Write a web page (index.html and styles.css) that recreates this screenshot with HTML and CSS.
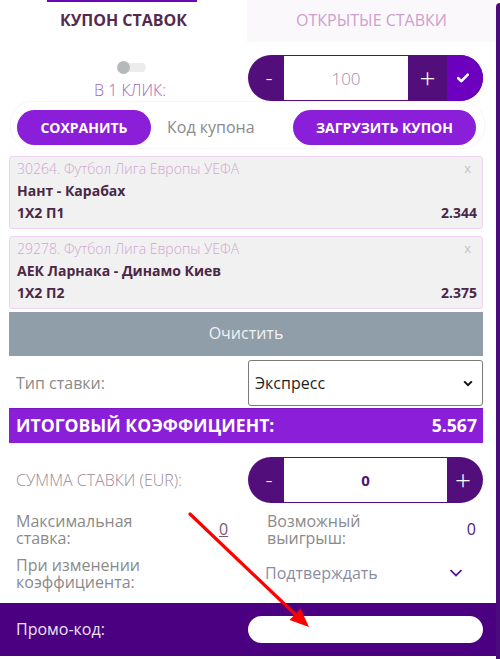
FILE: index.html
```html
<!DOCTYPE html>
<html lang="ru">
<head>
<meta charset="utf-8">
<title>Купон ставок</title>
<link rel="stylesheet" href="styles.css">
</head>
<body>
<div class="page">
  <div class="main">
    <div class="tabs">
      <div class="tab tab-active">КУПОН СТАВОК</div>
      <div class="tab tab-idle">ОТКРЫТЫЕ СТАВКИ</div>
    </div>

    <div class="oneclick">
      <div class="oneclick-left">
        <div class="toggle"><span class="toggle-knob"></span></div>
        <div class="oneclick-label">В 1 КЛИК:</div>
      </div>
      <div class="stepper">
        <div class="step-btn step-minus">-</div>
        <div class="step-input step-input-light">100</div>
        <div class="step-btn step-plus">+</div>
        <div class="step-btn step-check">
          <svg width="12" height="10" viewBox="0 0 12 10"><path d="M1.2 5.2 L4.4 8.2 L10.8 1.6" fill="none" stroke="#fff" stroke-width="2.6" stroke-linecap="round" stroke-linejoin="round"/></svg>
        </div>
      </div>
    </div>

    <div class="coupon-row">
      <div class="pill-btn pill-save">СОХРАНИТЬ</div>
      <div class="coupon-code">Код купона</div>
      <div class="pill-btn pill-load">ЗАГРУЗИТЬ КУПОН</div>
    </div>

    <div class="bets">
      <div class="bet">
        <div class="bet-line bet-head"><span class="bet-league">30264. Футбол Лига Европы УЕФА</span><span class="bet-close">x</span></div>
        <div class="bet-line bet-match">Нант - Карабах</div>
        <div class="bet-line bet-market"><span>1X2 П1</span><span>2.344</span></div>
      </div>
      <div class="bet">
        <div class="bet-line bet-head"><span class="bet-league">29278. Футбол Лига Европы УЕФА</span><span class="bet-close">x</span></div>
        <div class="bet-line bet-match">АЕК Ларнака - Динамо Киев</div>
        <div class="bet-line bet-market"><span>1X2 П2</span><span>2.375</span></div>
      </div>
    </div>

    <div class="clear-btn">Очистить</div>

    <div class="type-row">
      <div class="type-label">Тип ставки:</div>
      <div class="select">
        <span>Экспресс</span>
        <svg width="10" height="7" viewBox="0 0 10 7"><path d="M1.2 1.4 L5 5.2 L8.8 1.4" fill="none" stroke="#111" stroke-width="2"/></svg>
      </div>
    </div>

    <div class="total-bar">
      <span>ИТОГОВЫЙ КОЭФФИЦИЕНТ:</span>
      <span>5.567</span>
    </div>

    <div class="sum-row">
      <div class="sum-label">СУММА СТАВКИ (EUR):</div>
      <div class="stepper">
        <div class="step-btn step-minus">-</div>
        <div class="step-input step-input-bold">0</div>
        <div class="step-btn step-plus step-plus-end">+</div>
      </div>
    </div>

    <div class="info-grid">
      <div class="info-label">Максимальная<br>ставка:</div>
      <div class="info-value info-link">0</div>
      <div class="info-label info-label-right">Возможный<br>выигрыш:</div>
      <div class="info-value info-win">0</div>
    </div>

    <div class="change-row">
      <div class="info-label">При изменении<br>коэффициента:</div>
      <div class="confirm">
        <span>Подтверждать</span>
        <svg width="14" height="8" viewBox="0 0 14 8"><path d="M1.5 1.2 L7 6.4 L12.5 1.2" fill="none" stroke="#5a1a8a" stroke-width="1.8"/></svg>
      </div>
    </div>

    <div class="promo">
      <div class="promo-label">Промо-код:</div>
      <div class="promo-input"></div>
    </div>
  </div>
  <div class="edge"></div>

  <svg class="annotation" width="500" height="659" viewBox="0 0 500 659">
    <line x1="190" y1="514" x2="297" y2="616" stroke="#ff0000" stroke-width="3.2" stroke-linecap="round"/>
    <polygon points="309,627 289.5,620 300.5,608.5" fill="#ff0000"/>
  </svg>
</div>
</body>
</html>
```

FILE: styles.css
```css
* { box-sizing: border-box; }
html, body { margin: 0; padding: 0; background: #fff; }
body { font-family: "Open Sans", "Liberation Sans", sans-serif; font-size: 16px; }

.page { position: relative; width: 500px; height: 659px; display: flex; overflow: hidden; }
.main { width: 496px; display: flex; flex-direction: column; }
.edge { width: 4px; margin-top: 3px; background: #4b0a7e; border-top-left-radius: 6px; }

.annotation { position: absolute; left: 0; top: 0; pointer-events: none; }

/* tabs */
.tabs { display: grid; grid-template-columns: 247px 249px; height: 42px; }
.tab { display: flex; align-items: center; justify-content: center; font-size: 16px; padding-bottom: 2px; }
.tab-active { position: relative; color: #522c4f; font-weight: 700; background: #fff; }
.tab-active::before { content: ""; position: absolute; left: 47px; top: 0; width: 150px; height: 2px; background: #6a08b8; }
.tab-idle { color: #cc9fcd; background: #fbf8fb; font-weight: 400; }

/* one click */
.oneclick { display: flex; height: 59px; }
.oneclick-left { width: 248px; display: flex; flex-direction: column; align-items: center; padding-top: 19px; padding-left: 14px; }
.toggle { position: relative; width: 29px; height: 13px; }
.toggle::before { content: ""; position: absolute; left: 5px; top: 2px; width: 24px; height: 9px; border-radius: 5px; background: #ececec; }
.toggle-knob { position: absolute; left: 0; top: 0; width: 13px; height: 13px; border-radius: 50%; background: #b5b9b9; }
.oneclick-label { margin-top: 6px; color: #9d6ab8; font-weight: 300; font-size: 16px; line-height: 22px; margin-left: -2px; }

.stepper { margin-top: 13px; width: 235px; height: 46px; display: flex; border-radius: 23px; overflow: hidden; background: #520f7c; }
.step-btn { display: flex; align-items: center; justify-content: center; color: #fff; font-weight: 300; }
.step-minus { width: 36px; font-size: 22px; padding-left: 6px; padding-bottom: 3px; }
.step-plus { width: 39px; font-size: 28px; padding-bottom: 3px; }
.step-plus-end { width: 36px; padding-right: 4px; }
.step-check { width: 36px; background: #6d00bf; padding-right: 4px; }
.step-input { flex: 1; margin: 1px 0; background: #fff; display: flex; align-items: center; justify-content: center; }
.step-input-light { color: #a78aa8; font-weight: 300; font-size: 17px; }
.step-input-bold { color: #4d1575; font-weight: 700; font-size: 15px; }

/* coupon row */
.coupon-row { margin: 0 11px 0 10px; height: 48px; border: 1px solid #f8f5f8; border-radius: 22px; display: flex; align-items: flex-start; padding: 8px 0 0 6px; }
.pill-btn { height: 35px; border-radius: 18px; background: #8a1ed9; color: #fff; font-weight: 700; font-size: 14px; display: flex; align-items: center; justify-content: center; }
.pill-save { width: 134px; }
.pill-load { width: 183px; margin-left: auto; margin-right: 8px; }
.coupon-code { margin-left: 16px; line-height: 35px; color: #8a8a8a; font-size: 16px; }

/* bets */
.bets { margin: 7px 13px 0 9px; display: flex; flex-direction: column; gap: 7px; }
.bet { height: 73px; background: #f1f1f1; border: 1px solid #f0d3f0; border-radius: 3px; padding: 0 5px 0 7px; }
.bet-line { height: 22.5px; display: flex; align-items: center; justify-content: space-between; font-size: 14px; }
.bet-head { height: 22px; }
.bet-league { color: #cfa7d1; font-weight: 300; }
.bet-close { color: #c2c2c2; font-size: 13px; margin-right: 6px; }
.bet-match { color: #4b2747; font-weight: 700; }
.bet-market { color: #4b2747; font-weight: 700; }

.clear-btn { margin: 3px 13px 0 9px; height: 44px; background: #8f9ea9; color: #f2f2f2; font-size: 16px; display: flex; align-items: center; justify-content: center; padding-bottom: 2px; }

/* type */
.type-row { display: flex; height: 52px; align-items: flex-start; }
.type-label { width: 248px; padding-left: 16px; color: #8a8a8a; font-size: 16px; line-height: 46px; margin-top: 4px; }
.select { margin-top: 4px; width: 235px; height: 46px; border: 1px solid #7a7a7a; border-radius: 3px; display: flex; align-items: center; justify-content: space-between; padding: 0 9px 0 6px; color: #1e1e1e; font-size: 16px; }

.total-bar { margin: 0 13px 0 9px; height: 35px; background: #8a1ed9; border-top: 1px solid #7a18c4; color: #fff; font-weight: 700; font-size: 17.6px; display: flex; align-items: center; justify-content: space-between; padding: 0 6px 2px 7px; }

/* sum */
.sum-row { display: flex; height: 60px; align-items: flex-start; }
.sum-label { width: 248px; padding-left: 16px; margin-top: 14px; line-height: 46px; color: #9a8a98; font-weight: 300; font-size: 16px; }
.sum-row .stepper { margin-top: 14px; }

/* info */
.info-grid { margin-top: 10px; display: grid; grid-template-columns: 200px 48px 200px 35px; }
.info-label { padding-left: 16px; color: #8a8a8a; font-size: 16px; line-height: 16.5px; }
.info-label-right { padding-left: 19px; }
.info-value { display: flex; align-items: center; justify-content: flex-end; font-size: 16px; padding-bottom: 2px; }
.info-link { color: #7a5878; text-decoration: underline; justify-content: flex-start; padding-left: 19px; }
.info-win { color: #4f1a7a; justify-content: flex-end; padding-right: 7px; }

.change-row { margin-top: 11px; display: flex; align-items: center; }
.change-row .info-label { width: 248px; }
.confirm { width: 198px; margin-left: 17px; display: flex; align-items: center; justify-content: space-between; color: #8a8ca4; font-size: 16px; padding-bottom: 2px; }
.confirm svg { margin-bottom: -1px; }

/* promo */
.promo { margin-top: 13px; height: 53px; background: #4b0082; display: flex; align-items: center; }
.promo-label { width: 248px; padding-left: 16px; color: #ece4f2; font-size: 16px; padding-bottom: 2px; }
.promo-input { width: 235px; height: 27px; background: #fff; border-radius: 14px; }
```
